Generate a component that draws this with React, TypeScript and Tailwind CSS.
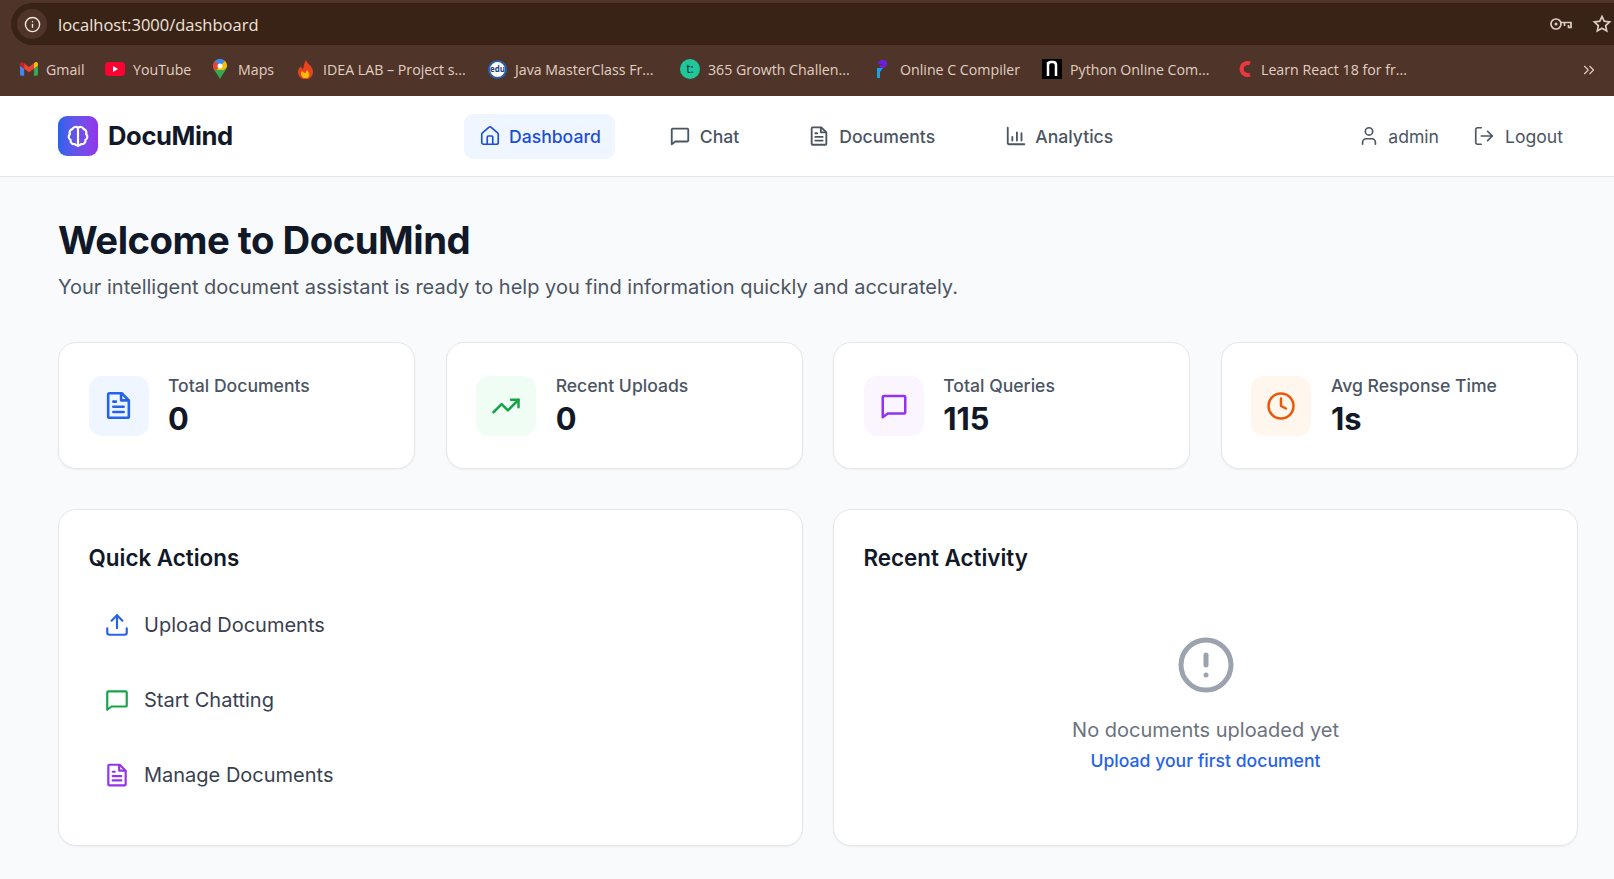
import React from 'react';
import { RiStarLine } from 'react-icons/ri';
import { ChevronsRight, CircleAlert, Clock, House, Info, LogOut, TrendingUp, Upload, User } from 'lucide-react';

type IconProps = { className?: string };

function Svg({ className, children }: IconProps & { children: React.ReactNode }) {
  return (
    <svg viewBox="0 0 24 24" fill="none" stroke="currentColor" strokeWidth="2" strokeLinecap="round" strokeLinejoin="round" className={className}>
      {children}
    </svg>
  );
}

function ChatIcon({ className }: IconProps) {
  return (
    <Svg className={className}>
      <path d="M4 4h16a1 1 0 0 1 1 1v12a1 1 0 0 1-1 1H7l-4 3V5a1 1 0 0 1 1-1z" />
    </Svg>
  );
}

function DocIcon({ className }: IconProps) {
  return (
    <Svg className={className}>
      <path d="M5 2.500h9.500L20 8v12.500a1 1 0 0 1-1 1H5a1 1 0 0 1-1-1v-17a1 1 0 0 1 1-1z" />
      <path d="M14 3v5h5.500" />
      <path d="M8 9h2M8 13h8M8 17h8" />
    </Svg>
  );
}

function BarsIcon({ className }: IconProps) {
  return (
    <Svg className={className}>
      <path d="M3 3v17a1 1 0 0 0 1 1h17" />
      <path d="M8 17v-4M13 17V8M18 17V9" />
    </Svg>
  );
}

function BrainIcon({ className }: IconProps) {
  return (
    <Svg className={className}>
      <path d="M12 4.500A3.200 3.200 0 0 0 6.800 5.600 3.200 3.200 0 0 0 4.600 10.200 3.200 3.200 0 0 0 5.200 15.600 3.200 3.200 0 0 0 9.200 19.400 3 3 0 0 0 12 20.800 3 3 0 0 0 14.800 19.400 3.200 3.200 0 0 0 18.800 15.600 3.200 3.200 0 0 0 19.400 10.200 3.200 3.200 0 0 0 17.200 5.600 3.200 3.200 0 0 0 12 4.500Z" />
      <path d="M12 4.500v16.300" />
    </Svg>
  );
}

function KeyIcon({ className }: IconProps) {
  return (
    <svg viewBox="0 0 22 12" fill="none" stroke="currentColor" strokeWidth="1.700" className={className}>
      <circle cx="6" cy="6" r="5" />
      <circle cx="6" cy="6" r="1.500" fill="currentColor" stroke="none" />
      <path d="M11 4.500h10v5h-2.500V7M14.500 4.500V8" />
    </svg>
  );
}

const stats = [
  { label: 'Total Documents', value: '0', box: 'bg-[#eff6ff] text-[#2563eb]', icon: <DocIcon className="size-[31px]" /> },
  { label: 'Recent Uploads', value: '0', box: 'bg-[#f0fdf4] text-[#16a34a]', icon: <TrendingUp className="size-[30px]" /> },
  { label: 'Total Queries', value: '115', box: 'bg-[#faf5ff] text-[#9333ea]', icon: <ChatIcon className="size-[30px]" /> },
  { label: 'Avg Response Time', value: '1s', box: 'bg-[#fff7ed] text-[#ea580c]', icon: <Clock className="size-[30px]" /> },
];

const actions = [
  { label: 'Upload Documents', icon: <Upload className="size-[26px] text-[#2563eb]" strokeWidth={2} /> },
  { label: 'Start Chatting', icon: <ChatIcon className="size-[26px] text-[#16a34a]" /> },
  { label: 'Manage Documents', icon: <DocIcon className="size-[26px] text-[#9333ea]" /> },
];

function GmailIcon() {
  return (
    <svg viewBox="0 0 24 18" className="h-[14px] w-[18px]">
      <path d="M1.600 18H5.500V8.500L0 4.400V16.400C0 17.300.7 18 1.600 18Z" fill="#4285f4" />
      <path d="M18.500 18H22.400C23.300 18 24 17.300 24 16.400V4.400L18.500 8.500Z" fill="#34a853" />
      <path d="M18.500 1.400V8.500L24 4.400V2.200C24 .2 21.700-1 20.100.2Z" fill="#fbbc04" />
      <path d="M5.500 8.500V1.400L12 6.300 18.500 1.400V8.500L12 13.400Z" fill="#ea4335" />
      <path d="M0 2.200V4.400L5.500 8.500V1.400L3.900.2C2.300-1 0 .2 0 2.200Z" fill="#c5221f" />
    </svg>
  );
}

function Bookmark({ className, gap, icon, label }: { className: string; gap: string; icon: React.ReactNode; label: string }) {
  return (
    <div className={`flex shrink-0 items-center ${className}`}>
      <div className={`flex shrink-0 items-center justify-start ${gap}`}>{icon}</div>
      <span className="whitespace-nowrap">{label}</span>
    </div>
  );
}

export default function App() {
  return (
    <div className="h-[879px] overflow-hidden bg-[#f9fafb] font-['Inter',sans-serif]">
      {/* browser chrome */}
      <div className="h-[96px] bg-[#4f3529] pt-[3px]">
        <div className="ml-[11px] flex h-[42px] items-center rounded-l-full bg-[#392316] pl-[6px]">
          <div className="flex size-[30px] items-center justify-center rounded-full bg-[#4f3529]">
            <Info className="size-[17px] text-[#f0e4da]" strokeWidth={2} />
          </div>
          <span className="ml-[11px] pt-[2px] font-['Open_Sans',sans-serif] text-[16.5px] text-[#efe3da]">localhost:3000/dashboard</span>
          <div className="ml-auto flex items-center gap-[20px] pr-[2px] text-[#dccdc2]">
            <KeyIcon className="h-[12px] w-[22px]" />
            <RiStarLine className="size-[20px]" />
          </div>
        </div>
        <div className="flex h-[49px] items-center pl-[20px] font-['Open_Sans',sans-serif] text-[14.2px] text-[#e0cfc2]">
          <Bookmark className="w-[85px]" gap="w-[26px]" icon={<GmailIcon />} label="Gmail" />
          <Bookmark
            className="w-[108px]"
            gap="w-[28px]"
            icon={
              <svg viewBox="0 0 20 14" className="h-[14px] w-[20px]">
                <rect width="20" height="14" rx="4" fill="#ff0033" />
                <path d="M8 4l5 3-5 3z" fill="#fff" />
              </svg>
            }
            label="YouTube"
          />
          <Bookmark
            className="w-[85px]"
            gap="w-[25px]"
            icon={
              <svg viewBox="0 0 14 20" className="h-[20px] w-[14px]">
                <path d="M7 0C3 0 0 3 0 7c0 4 4 7 7 13 3-6 7-9 7-13 0-4-3-7-7-7z" fill="#34a853" />
                <path d="M7 0C5 0 3 1 2 2l5 5 5-5C11 1 9 0 7 0z" fill="#4285f4" />
                <path d="M2 2C1 3 0 5 0 7c0 2 1 3 2 5l5-5z" fill="#ea4335" />
                <path d="M12 2L7 7 3.500 11 10.500 11C12.500 9.500 14 8.500 14 7c0-2-1-4-2-5z" fill="#fbbc04" />
                <circle cx="7" cy="7" r="2.500" fill="#fff" />
              </svg>
            }
            label="Maps"
          />
          <Bookmark
            className="w-[190px]"
            gap="w-[25px]"
            icon={
              <svg viewBox="0 0 15 19" className="h-[19px] w-[15px]">
                <path d="M8 0c1 4 7 6 7 12a7.500 7.500 0 0 1-15 0c0-3 2-5 3-6 0 2 1 3 2 3C6 6 6 3 8 0z" fill="#e8431f" />
                <path d="M4 11a4.500 4.500 0 0 0 5 7c3-1 3-5 0-8-1 1-1 3-2 3s-2-1-3-2z" fill="#fbbc04" />
              </svg>
            }
            label="IDEA LAB – Project s..."
          />
          <Bookmark
            className="w-[192px]"
            gap="w-[27px]"
            icon={
              <div className="flex size-[19px] items-center justify-center rounded-full border-2 border-[#2d5fa8] bg-white text-[8px] font-bold text-[#24406f]">
                edu
              </div>
            }
            label="Java MasterClass Fr..."
          />
          <Bookmark
            className="w-[197px]"
            gap="w-[28px]"
            icon={<div className="flex size-[20px] items-center justify-center rounded-full bg-[#1fc79a] text-[12px] text-[#112233]">t:</div>}
            label="365 Growth Challen..."
          />
          <Bookmark
            className="w-[165px]"
            gap="w-[23px]"
            icon={
              <svg viewBox="0 0 10 18" className="h-[18px] w-[10px]">
                <path d="M0 3L4 0h3c2 0 3 2 3 4s-2 4-4 4H3V5h3z" fill="#6d1fd8" />
                <path d="M0 8l6 0-3 4v6H0z" fill="#0ea5e9" />
              </svg>
            }
            label="Online C Compiler"
          />
          <Bookmark
            className="w-[196px]"
            gap="w-[28px]"
            icon={
              <svg viewBox="0 0 20 20" className="size-[20px]">
                <rect width="20" height="20" fill="#000" />
                <path d="M6 17V3M6 6c0-2 1-3 3-3h2c2 0 3 1 3 3v11" fill="none" stroke="#fff" strokeWidth="2.500" />
              </svg>
            }
            label="Python Online Com..."
          />
          <Bookmark
            className="w-[200px]"
            gap="w-[23px]"
            icon={
              <svg viewBox="0 0 14 18" className="h-[18px] w-[14px]">
                <path d="M12 3.500A6 6 0 1 0 12 14.500" fill="none" stroke="#e9383f" strokeWidth="4" />
              </svg>
            }
            label="Learn React 18 for fr..."
          />
          <ChevronsRight className="ml-auto mr-[16px] size-[18px] text-[#e0cfc2]" strokeWidth={1.5} />
        </div>
      </div>

      {/* app nav */}
      <nav className="flex h-[81px] items-center border-b border-[#e5e7eb] bg-white pl-[58px] pr-[51px]">
        <div className="flex w-[406px] items-center gap-[10px]">
          <div className="flex size-[40px] items-center justify-center rounded-[9px] bg-gradient-to-r from-[#2563eb] to-[#9333ea]">
            <BrainIcon className="size-[26px] text-white" />
          </div>
          <span className="pt-px text-[25.6px] font-bold tracking-[-0.4px] text-[#111827]">DocuMind</span>
        </div>
        <div className="flex items-center gap-[39px] text-[17.6px] font-medium text-[#4b5563]">
          <a className="flex h-[45px] items-center gap-[8px] rounded-[9px] bg-[#eff6ff] pl-[15px] pr-[14px] pt-[2px] text-[#1d4ed8]">
            <House className="-mt-[2px] size-[22px]" strokeWidth={1.8} />
            Dashboard
          </a>
          <a className="flex h-[45px] items-center gap-[9px] px-[15px] pt-[2px]">
            <ChatIcon className="-mt-[2px] size-[22px]" />
            Chat
          </a>
          <a className="flex h-[45px] items-center gap-[9px] px-[15px] pt-[2px]">
            <DocIcon className="-mt-[2px] size-[22px]" />
            Documents
          </a>
          <a className="ml-px flex h-[45px] items-center gap-[8px] px-[15px] pt-[2px]">
            <BarsIcon className="-mt-[2px] size-[22px]" />
            Analytics
          </a>
        </div>
        <div className="ml-auto flex items-center gap-[34px] pt-[2px] text-[17.6px] text-[#4b5563]">
          <div className="flex items-center gap-[8px]">
            <User className="-mt-[2px] size-[22px]" strokeWidth={1.8} />
            admin
          </div>
          <div className="flex items-center gap-[10px]">
            <LogOut className="-mt-[2px] size-[22px]" strokeWidth={1.8} />
            Logout
          </div>
        </div>
      </nav>

      {/* page body */}
      <main className="pl-[58px] pr-[36px] pt-[39px]">
        <h1 className="text-[38.3px] leading-[48px] font-bold tracking-[-0.5px] text-[#111827]">Welcome to DocuMind</h1>
        <p className="mt-[8px] text-[20px] leading-[30px] text-[#4b5563]">
          Your intelligent document assistant is ready to help you find information quickly and accurately.
        </p>

        <div className="mt-[40px] grid grid-cols-4 gap-[30.5px]">
          {stats.map((s) => (
            <div key={s.label} className="flex h-[127px] items-center gap-[19.5px] rounded-[18px] border border-[#e5e7eb] bg-white px-[29.5px] shadow-xs">
              <div className={`flex size-[60px] shrink-0 items-center justify-center rounded-[13px] ${s.box}`}>{s.icon}</div>
              <div className="pb-[2px]">
                <div className="text-[17.6px] leading-[26px] font-medium text-[#4b5563]">{s.label}</div>
                <div className="mt-[2px] text-[30.8px] leading-[36px] font-bold text-[#111827]">{s.value}</div>
              </div>
            </div>
          ))}
        </div>

        <div className="mt-[40px] grid grid-cols-2 gap-[30px]">
          <section className="h-[337px] rounded-[18px] border border-[#e5e7eb] bg-white px-[29.5px] pt-[32px] shadow-xs">
            <h2 className="text-[22.4px] leading-[32px] font-semibold text-[#111827]">Quick Actions</h2>
            <div className="mt-[23px] flex flex-col gap-[20px]">
              {actions.map((a) => (
                <div key={a.label} className="flex h-[55px] items-center gap-[14px] pl-[15.5px] text-[20px] text-[#374151]">
                  {a.icon}
                  {a.label}
                </div>
              ))}
            </div>
          </section>
          <section className="h-[337px] rounded-[18px] border border-[#e5e7eb] bg-white px-[29.5px] pt-[32px] shadow-xs">
            <h2 className="text-[22.4px] leading-[32px] font-semibold text-[#111827]">Recent Activity</h2>
            <div className="mt-[61px] flex flex-col items-center">
              <CircleAlert className="size-[60px] text-[#9ca3af]" />
              <p className="mt-[20px] text-[20px] leading-[30px] text-[#6b7280]">No documents uploaded yet</p>
              <a className="mt-px text-[17.6px] leading-[30px] font-medium text-[#2563eb]">Upload your first document</a>
            </div>
          </section>
        </div>
      </main>
    </div>
  );
}
